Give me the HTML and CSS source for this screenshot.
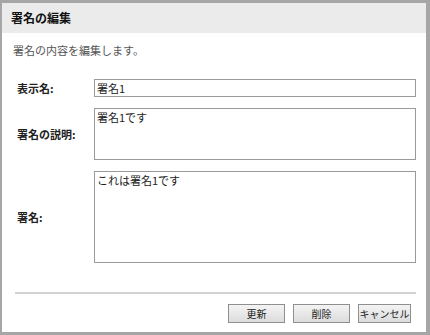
FILE: index.html
```html
<!DOCTYPE html>
<html lang="ja">
<head>
  <meta charset="UTF-8" />
  <title>署名の編集</title>
  <link rel="stylesheet" href="styles.css">
</head>
<body>
  <div class="dialog">
    <div class="dialog-title">署名の編集</div>
    <div class="dialog-body">
      <p class="desc">署名の内容を編集します。</p>

      <div class="form">
        <label class="field-label" for="dispName">表示名:</label>
        <input class="field-input" id="dispName" type="text" value="署名1">

        <label class="field-label" for="sigDesc">署名の説明:</label>
        <textarea class="field-area short" id="sigDesc">署名1です</textarea>

        <label class="field-label" for="sigBody">署名:</label>
        <textarea class="field-area tall" id="sigBody">これは署名1です</textarea>
      </div>

      <hr class="sep">

      <div class="buttons">
        <button class="btn btn-update">更新</button>
        <button class="btn btn-delete">削除</button>
        <button class="btn btn-cancel">キャンセル</button>
      </div>
    </div>
  </div>
</body>
</html>
```

FILE: styles.css
```css
html, body {
  margin: 0;
  padding: 0;
  background: #fff;
  font-family: "Noto Sans CJK JP", "Liberation Sans", sans-serif;
  font-size: 11px;
  color: #222;
}

.dialog {
  width: 430px;
  height: 335px;
  box-sizing: border-box;
  border-style: solid;
  border-color: #a6a6a6;
  border-width: 3px 4px 3px 2px;
  background: #fff;
  display: flex;
  flex-direction: column;
}

.dialog-title {
  height: 30px;
  line-height: 29px;
  padding-left: 9px;
  background: #ebebeb;
  font-size: 12px;
  font-weight: bold;
  color: #111;
}

.dialog-body {
  padding: 0 10px 0 11px;
}

.desc {
  margin: 10px 0 0 0;
  line-height: 14px;
  color: #555;
}

.form {
  display: grid;
  grid-template-columns: 81px 1fr;
  row-gap: 11px;
  align-items: center;
  margin-top: 22px;
}

.field-label {
  padding-left: 4px;
  font-weight: bold;
  color: #222;
}

.field-input,
.field-area {
  box-sizing: border-box;
  width: 100%;
  margin: 0;
  border: 1px solid #9a9a9a;
  padding: 1px 2px;
  font-family: "Noto Sans CJK JP", "Liberation Sans", sans-serif;
  font-size: 11px;
  color: #222;
  background: #fff;
  resize: none;
  outline: none;
}

.field-input {
  height: 18px;
  line-height: 14px;
}

.field-area {
  line-height: 14px;
}

.short {
  height: 52px;
}

.tall {
  height: 92px;
}

.sep {
  margin: 29px 0 0 2px;
  border: 0;
  height: 2px;
  background: #d2d2d2;
}

.buttons {
  display: flex;
  justify-content: flex-end;
  gap: 8px;
  margin-top: 10px;
  padding-right: 5px;
}

.btn {
  height: 19px;
  padding: 0;
  border: 1px solid #8f8f8f;
  background: linear-gradient(#f4f4f4, #dcdcdc);
  font-family: "Noto Sans CJK JP", "Liberation Sans", sans-serif;
  font-size: 10px;
  color: #222;
  line-height: 17px;
  white-space: nowrap;
}

.btn-update,
.btn-delete {
  width: 57px;
}

.btn-cancel {
  width: 53px;
}
```
